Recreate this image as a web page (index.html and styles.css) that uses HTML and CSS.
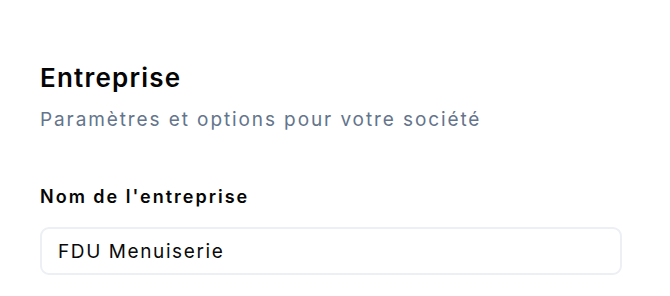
FILE: index.html
```html
<!DOCTYPE html>
<html lang="fr">
<head>
<meta charset="utf-8">
<link rel="stylesheet" href="styles.css">
</head>
<body>
<section class="panel">
  <header class="head">
    <h2 class="title">Entreprise</h2>
    <p class="subtitle">Paramètres et options pour votre société</p>
  </header>
  <div class="field">
    <label class="label" for="company">Nom de l'entreprise</label>
    <div class="input" id="company">FDU Menuiserie</div>
  </div>
</section>
</body>
</html>
```
FILE: styles.css
```css
html, body { margin: 0; padding: 0; background: #fff; }
body { font-family: "Inter", "Noto Sans", sans-serif; color: #0a0a0a; }
.panel { padding: 62px 48px 0 40px; display: flex; flex-direction: column; gap: 50px; }
.head { display: flex; flex-direction: column; gap: 12px; }
.title { margin: 0; font-size: 26px; line-height: 32px; font-weight: 600; letter-spacing: 1.2px; color: #050505; }
.subtitle { margin: 0; font-size: 19px; line-height: 28px; color: #64748b; font-weight: 400; letter-spacing: 1.9px; }
.field { display: flex; flex-direction: column; gap: 17px; }
.label { font-size: 18px; line-height: 26px; font-weight: 600; letter-spacing: 2px; color: #050505; }
.input { box-sizing: border-box; width: 582px; height: 48px; border: 2px solid #eceff3; border-radius: 9px; padding: 0 16px; display: flex; align-items: center; font-size: 19px; letter-spacing: 1.6px; color: #0a0a0a; }
```
